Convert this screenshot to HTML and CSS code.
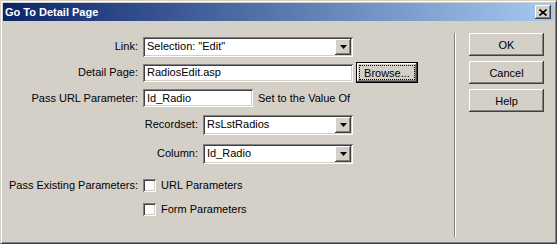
FILE: index.html
```html
<!DOCTYPE html>
<html lang="en">
<head>
    <meta charset="UTF-8">
    <title>Go To Detail Page</title>
    <link rel="stylesheet" href="styles.css">
</head>
<body>

    <div class="window">
        <div class="title-bar">
            <span class="title">Go To Detail Page</span>
            <span class="close-btn">
                <svg width="8" height="7" viewBox="0 0 8 7"><path d="M0.5 0.5 L7.5 6.5 M7.5 0.5 L0.5 6.5" stroke="#000" stroke-width="1.6" fill="none"/></svg>
            </span>
        </div>

        <div class="client">
            <div class="form">
                <div class="row row-link">
                    <span class="label">Link:</span>
                    <div class="field select select-wide">
                        <span class="value">Selection: "Edit"</span>
                        <span class="drop"><svg width="7" height="4" viewBox="0 0 7 4"><polygon points="0,0 7,0 3.5,4" fill="#000"/></svg></span>
                    </div>
                </div>

                <div class="row row-page">
                    <span class="label">Detail Page:</span>
                    <div class="field input input-page"><span class="value">RadiosEdit.asp</span></div>
                    <button class="btn btn-focus"><span class="focus-rect">Browse...</span></button>
                </div>

                <div class="row row-param">
                    <span class="label">Pass URL Parameter:</span>
                    <div class="field input input-param"><span class="value">Id_Radio</span></div>
                    <span class="note">Set to the Value Of</span>
                </div>

                <div class="row row-recordset">
                    <span class="label label-sub">Recordset:</span>
                    <div class="field select select-narrow">
                        <span class="value">RsLstRadios</span>
                        <span class="drop"><svg width="7" height="4" viewBox="0 0 7 4"><polygon points="0,0 7,0 3.5,4" fill="#000"/></svg></span>
                    </div>
                </div>

                <div class="row row-column">
                    <span class="label label-sub">Column:</span>
                    <div class="field select select-narrow">
                        <span class="value">Id_Radio</span>
                        <span class="drop"><svg width="7" height="4" viewBox="0 0 7 4"><polygon points="0,0 7,0 3.5,4" fill="#000"/></svg></span>
                    </div>
                </div>

                <div class="row row-check">
                    <span class="label">Pass Existing Parameters:</span>
                    <span class="checkbox"></span>
                    <span class="check-text">URL Parameters</span>
                </div>

                <div class="row row-check2">
                    <span class="label"></span>
                    <span class="checkbox"></span>
                    <span class="check-text">Form Parameters</span>
                </div>
            </div>

            <div class="divider"></div>

            <div class="buttons">
                <button class="btn btn-side">OK</button>
                <button class="btn btn-side">Cancel</button>
                <button class="btn btn-side">Help</button>
            </div>
        </div>
    </div>

</body>
</html>
```

FILE: styles.css
```css
body {
    margin: 0;
    font-family: "Liberation Sans", Arial, sans-serif;
    font-size: 11px;
    color: #000;
    background-color: #d4d0c8;
}
.window {
    width: 557px;
    height: 244px;
    box-sizing: border-box;
    background-color: #d4d0c8;
    border: 1px solid;
    border-color: #d4d0c8 #404040 #404040 #d4d0c8;
    box-shadow: inset 1px 1px #fff, inset -1px -1px #808080;
    padding: 2px;
    display: flex;
    flex-direction: column;
}
.title-bar {
    height: 18px;
    background: linear-gradient(to right, #0a246a, #a6caf0);
    display: flex;
    align-items: center;
    justify-content: space-between;
    padding: 0 3px 0 2px;
}
.title {
    color: white;
    font-weight: bold;
    font-size: 11px;
    line-height: 13px;
}
.close-btn {
    width: 16px;
    height: 14px;
    box-sizing: border-box;
    background-color: #d4d0c8;
    box-shadow: inset -1px -1px #404040, inset 1px 1px #fff, inset -2px -2px #808080;
    display: flex;
    align-items: center;
    justify-content: center;
}
.client {
    flex: 1;
    display: flex;
}
.form {
    width: 451px;
    padding-top: 15px;
    display: flex;
    flex-direction: column;
}
.row {
    display: flex;
    align-items: center;
    line-height: 13px;
}
.row-link { height: 21px; }
.row-page { height: 21px; margin-top: 5px; }
.row-param { height: 20px; margin-top: 5px; }
.row-recordset { height: 21px; margin-top: 6px; }
.row-column { height: 21px; margin-top: 8px; }
.row-check { height: 15px; margin-top: 14px; }
.row-check2 { height: 15px; margin-top: 9px; }
.label {
    width: 135px;
    margin-right: 5px;
    text-align: right;
    flex-shrink: 0;
}
.label-sub {
    width: 195px;
}
.field {
    background-color: white;
    box-sizing: border-box;
    box-shadow: inset 1px 1px #808080, inset -1px -1px #fff, inset 2px 2px #404040, inset -2px -2px #d4d0c8;
    display: flex;
    align-items: center;
    padding: 2px;
}
.value {
    flex: 1;
    padding-left: 2px;
    white-space: nowrap;
}
.select {
    height: 20px;
}
.select-wide { width: 210px; }
.select-narrow { width: 150px; }
.drop {
    width: 16px;
    height: 16px;
    box-sizing: border-box;
    background-color: #d4d0c8;
    box-shadow: inset -1px -1px #404040, inset 1px 1px #fff, inset -2px -2px #808080;
    display: flex;
    align-items: center;
    justify-content: center;
    padding-top: 1px;
}
.input {
    height: 18px;
}
.input-page { width: 210px; }
.input-param { width: 110px; }
.note {
    margin-left: 5px;
}
.checkbox {
    width: 13px;
    height: 13px;
    background-color: white;
    box-shadow: inset 1px 1px #808080, inset -1px -1px #fff, inset 2px 2px #404040, inset -2px -2px #d4d0c8;
}
.check-text {
    margin-left: 5px;
}
.btn {
    font-family: "Liberation Sans", Arial, sans-serif;
    font-size: 11px;
    color: #000;
    background-color: #d4d0c8;
    border: none;
    padding: 0;
    box-shadow: inset -1px -1px #404040, inset 1px 1px #fff, inset -2px -2px #808080;
}
.btn-focus {
    width: 62px;
    height: 21px;
    margin-left: 3px;
    display: flex;
    box-shadow: inset 0 0 0 1px #000, inset -2px -2px #404040, inset 2px 2px #fff, inset -3px -3px #808080;
}
.focus-rect {
    flex: 1;
    margin: 3px;
    border: 1px dotted #000;
    display: flex;
    align-items: center;
    justify-content: center;
}
.divider {
    border-left: 1px solid #808080;
    border-right: 1px solid #fff;
    margin: 12px 0 4px 0;
}
.buttons {
    padding: 12px 0 0 13px;
    display: flex;
    flex-direction: column;
    gap: 5px;
}
.btn-side {
    width: 75px;
    height: 23px;
}
```
